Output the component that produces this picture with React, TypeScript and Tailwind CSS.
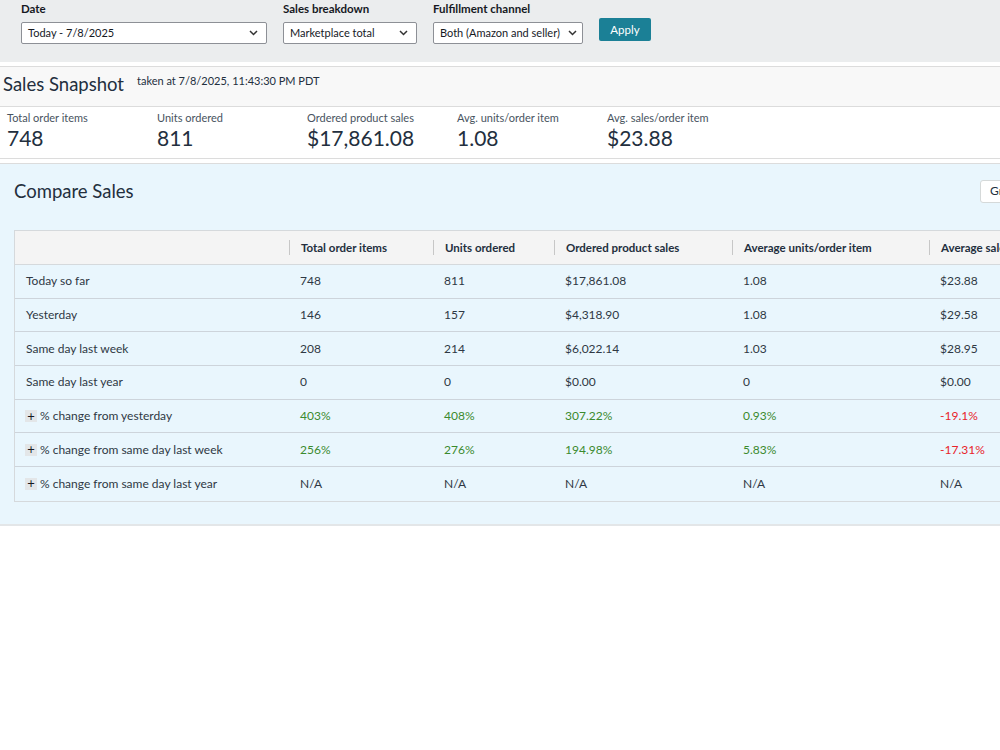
import React from "react";

const font = { fontFamily: "Lato, 'Liberation Sans', sans-serif" };

type Tone = "plain" | "up" | "down";

interface Row {
  label: string;
  expandable?: boolean;
  cells: { value: string; tone?: Tone }[];
}

const metrics = [
  { label: "Total order items", value: "748" },
  { label: "Units ordered", value: "811" },
  { label: "Ordered product sales", value: "$17,861.08" },
  { label: "Avg. units/order item", value: "1.08" },
  { label: "Avg. sales/order item", value: "$23.88" },
];

const columns = [
  "Total order items",
  "Units ordered",
  "Ordered product sales",
  "Average units/order item",
  "Average sales/order item",
];

const plain = (...v: string[]) => v.map((value) => ({ value }));
const toned = (...v: [string, Tone][]) => v.map(([value, tone]) => ({ value, tone }));

const rows: Row[] = [
  { label: "Today so far", cells: plain("748", "811", "$17,861.08", "1.08", "$23.88") },
  { label: "Yesterday", cells: plain("146", "157", "$4,318.90", "1.08", "$29.58") },
  { label: "Same day last week", cells: plain("208", "214", "$6,022.14", "1.03", "$28.95") },
  { label: "Same day last year", cells: plain("0", "0", "$0.00", "0", "$0.00") },
  {
    label: "% change from yesterday",
    expandable: true,
    cells: toned(["403%", "up"], ["408%", "up"], ["307.22%", "up"], ["0.93%", "up"], ["-19.1%", "down"]),
  },
  {
    label: "% change from same day last week",
    expandable: true,
    cells: toned(["256%", "up"], ["276%", "up"], ["194.98%", "up"], ["5.83%", "up"], ["-17.31%", "down"]),
  },
  {
    label: "% change from same day last year",
    expandable: true,
    cells: plain("N/A", "N/A", "N/A", "N/A", "N/A"),
  },
];

const toneClass: Record<Tone, string> = {
  plain: "text-[#2f3844]",
  up: "text-[#3b8a2e]",
  down: "text-[#e8232b]",
};

function Chevron() {
  return (
    <svg width="9" height="6" viewBox="0 0 9 6" fill="none" className="shrink-0">
      <path d="M1 1l3.5 3.5L8 1" stroke="#333" strokeWidth="1.5" />
    </svg>
  );
}

function Select({ label, value, width }: { label: string; value: string; width: string }) {
  return (
    <div className="flex flex-col">
      <span className="text-[11.5px] font-bold leading-4 text-[#16191f] mb-[5px] mt-px">{label}</span>
      <div
        className={`${width} h-[22px] flex items-center justify-between gap-2 bg-white border border-[#8d9096] rounded-[2px] pl-[6px] pr-[8px] text-[11px] text-[#16191f] whitespace-nowrap`}
      >
        <span>{value}</span>
        <Chevron />
      </div>
    </div>
  );
}

function FilterBar() {
  return (
    <div className="h-[62px] bg-[#ebedee] px-[21px] flex items-start gap-[16px]">
      <Select label="Date" value="Today - 7/8/2025" width="w-[246px]" />
      <Select label="Sales breakdown" value="Marketplace total" width="w-[134px]" />
      <Select label="Fulfillment channel" value="Both (Amazon and seller)" width="w-[150px]" />
      <button className="mt-[18px] h-[23px] w-[52px] bg-[#1b8096] text-white text-[11.5px] rounded-[2px]">
        Apply
      </button>
    </div>
  );
}

function Snapshot() {
  return (
    <div className="mt-[4px] border-y border-[#dcdcdc]">
      <div className="h-[40px] bg-[#f8f8f8] border-b border-[#dcdcdc] flex items-start pl-[3px]">
        <h2 className="text-[18.5px] leading-6 mt-[5px] text-[#232f3e]">Sales Snapshot</h2>
        <span className="text-[11px] leading-4 mt-[6px] ml-[13px] text-[#232f3e]">
          taken at 7/8/2025, 11:43:30 PM PDT
        </span>
      </div>
      <div className="h-[51px] bg-white flex pl-[7px] pt-[3px]">
        {metrics.map((m) => (
          <div key={m.label} className="w-[150px] flex flex-col">
            <span className="text-[11px] leading-4 text-[#485360]">{m.label}</span>
            <span className="text-[21px] leading-[24px] text-[#232f3e]">{m.value}</span>
          </div>
        ))}
      </div>
    </div>
  );
}

const grid = "grid grid-cols-[274px_144px_121px_178px_197px_170px]";

function CompareTable() {
  return (
    <div className="w-[1085px] border-l border-y border-[#d5d9dc]">
      <div className={`${grid} h-[34px] bg-[#f4f4f4] border-b border-[#d5d9dc]`}>
        <div />
        {columns.map((c) => (
          <div key={c} className="flex items-center">
            <span className="w-px h-[15px] bg-[#c7c7c7]" />
            <span className="ml-[11px] text-[11.5px] font-bold text-[#232f3e] whitespace-nowrap">{c}</span>
          </div>
        ))}
      </div>
      {rows.map((r, i) => (
        <div
          key={r.label}
          className={`${grid} h-[33.7px] ${i < rows.length - 1 ? "border-b border-[#cdd4db]" : ""}`}
        >
          <div className="flex items-center pl-[10px] text-xs text-[#2f3844]">
            {r.expandable && (
              <span className="w-[12px] h-[12px] mr-[3px] bg-[#e3e6e8] flex items-center justify-center text-[13px] leading-none text-[#16191f]">
                +
              </span>
            )}
            <span className={r.expandable ? "" : "pl-px"}>{r.label}</span>
          </div>
          {r.cells.map((c, j) => (
            <div key={j} className={`flex items-center pl-[11px] text-xs ${toneClass[c.tone ?? "plain"]}`}>
              {c.value}
            </div>
          ))}
        </div>
      ))}
    </div>
  );
}

function CompareSales() {
  return (
    <div className="mt-[4px] border-t border-[#dcdcdc] border-b-2 border-b-[#e3e6e8] bg-[#e9f6fd] pl-[14px] pt-[15px] pb-[22px]">
      <div className="flex items-center h-[24px] w-[1100px]">
        <h2 className="w-[966px] text-[18.5px] leading-6 text-[#232f3e]">Compare Sales</h2>
        <button className="h-[23px] bg-white border border-[#d5d9d9] rounded-[3px] pl-[9px] pr-[12px] text-xs text-[#232f3e] whitespace-nowrap">
          Graph view
        </button>
      </div>
      <div className="mt-[27px]">
        <CompareTable />
      </div>
    </div>
  );
}

export default function App() {
  return (
    <div className="w-[1000px] min-h-[750px] bg-white overflow-hidden" style={font}>
      <FilterBar />
      <Snapshot />
      <CompareSales />
    </div>
  );
}
